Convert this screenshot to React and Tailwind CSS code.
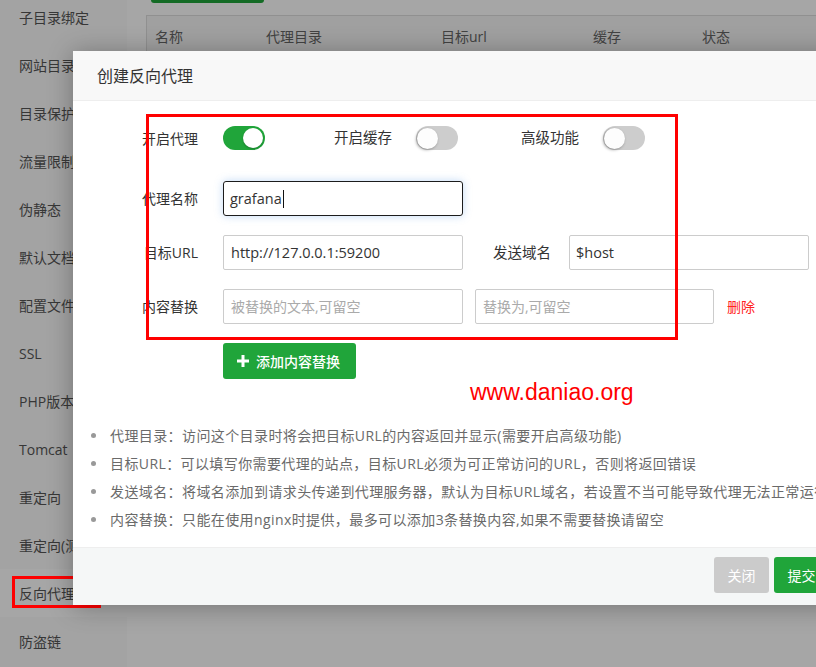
import React from "react";

const FONT = "font-['Open_Sans','Noto_Sans_CJK_SC',sans-serif]";

function Toggle({ on }) {
  return on ? (
    <div className="w-[42px] h-[24px] rounded-full bg-[#20a53a] flex items-center justify-end pr-[2px] shrink-0">
      <div className="w-[20px] h-[20px] rounded-full bg-white shadow-[0_1px_2px_rgba(0,0,0,0.25)]" />
    </div>
  ) : (
    <div className="w-[42px] h-[24px] rounded-full bg-[#cdcdcd] flex items-center pl-[1px] shrink-0">
      <div className="w-[21px] h-[21px] rounded-full bg-[#fdfdfd] shadow-[-1px_1px_3px_rgba(0,0,0,0.35)]" />
    </div>
  );
}

const sideItems = [
  "子目录绑定",
  "网站目录",
  "目录保护",
  "流量限制",
  "伪静态",
  "默认文档",
  "配置文件",
  "SSL",
  "PHP版本",
  "Tomcat",
  "重定向",
  "重定向(测试)",
  "反向代理",
  "防盗链",
];

const tips = [
  "代理目录：访问这个目录时将会把目标URL的内容返回并显示(需要开启高级功能)",
  "目标URL：可以填写你需要代理的站点，目标URL必须为可正常访问的URL，否则将返回错误",
  "发送域名：将域名添加到请求头传递到代理服务器，默认为目标URL域名，若设置不当可能导致代理无法正常运行",
  "内容替换：只能在使用nginx时提供，最多可以添加3条替换内容,如果不需要替换请留空",
];

export default function App() {
  return (
    <div className={`relative w-[816px] h-[667px] overflow-hidden bg-white ${FONT}`}>
      {/* background page */}
      <div className="flex h-full">
        <div className="w-[127px] shrink-0 bg-[#fafafa] overflow-hidden">
          <div className="mt-[-7px]">
            {sideItems.map((t) => (
              <div
                key={t}
                className={`h-[48px] flex items-center pl-[19px] text-[14px] text-[#555] whitespace-nowrap ${
                  t === "反向代理" ? "bg-white" : ""
                }`}
              >
                {t}
              </div>
            ))}
          </div>
        </div>
        <div className="flex-1 pl-[19px] relative">
          <div className="ml-[5px] mt-[-30px] w-[113px] h-[33px] rounded-[3px] bg-[#20a53a]" />
          <div className="mt-[12px] border border-[#ddd] border-r-0">
            <div className="h-[40px] bg-[#f6f6f6] flex items-center text-[14px] text-[#666]">
              <span className="ml-[8px] w-[111px]">名称</span>
              <span className="w-[175px]">代理目录</span>
              <span className="w-[152px]">目标url</span>
              <span className="w-[109px]">缓存</span>
              <span>状态</span>
            </div>
          </div>
        </div>
      </div>

      {/* dim overlay */}
      <div className="absolute inset-0 bg-black/[0.35]" />

      {/* sidebar annotation */}
      <div className="absolute left-[12px] top-[576px] w-[89px] h-[32px] border-[3px] border-[#ff0000]" />

      {/* modal */}
      <div className="absolute left-[73px] top-[51px] w-[771px] bg-white shadow-[0_2px_24px_rgba(0,0,0,0.3)]">
        <div className="h-[50px] bg-[#f8f8f8] border-b border-[#eee] flex items-center pl-[24px] text-[16px] text-[#333]">
          创建反向代理
        </div>

        <div className="relative pt-[25px] pb-[14px]">
          {/* row 1: toggles */}
          <div className="flex items-center h-[24px] text-[14px] text-[#333]">
            <span className="w-[125px] text-right">开启代理</span>
            <div className="ml-[25px]">
              <Toggle on />
            </div>
            <span className="ml-[69px] text-[14.5px]">开启缓存</span>
            <div className="ml-[24px]">
              <Toggle />
            </div>
            <span className="ml-[63px] text-[14.5px]">高级功能</span>
            <div className="ml-[24px]">
              <Toggle />
            </div>
          </div>

          {/* row 2 */}
          <div className="flex items-center mt-[31px] text-[14px] text-[#333]">
            <span className="w-[125px] text-right">代理名称</span>
            <div className="ml-[25px] w-[240px] h-[35px] rounded-[3px] border-[1.5px] border-[#1c1c1c] shadow-[0_0_8px_rgba(80,150,230,0.35)] flex items-center pl-[6px] text-[14.5px] text-[#333]">
              grafana
              <span className="w-[1px] h-[18px] bg-[#111] ml-[1px]" />
            </div>
          </div>

          {/* row 3 */}
          <div className="flex items-center mt-[19px] text-[14px] text-[#333]">
            <span className="w-[125px] text-right">目标URL</span>
            <div className="ml-[25px] w-[240px] h-[35px] rounded-[2px] border border-[#ccc] flex items-center pl-[7px] text-[14.5px] text-[#333]">
              http://127.0.0.1:59200
            </div>
            <span className="ml-[30px] text-[14.5px]">发送域名</span>
            <div className="ml-[18px] w-[240px] h-[35px] rounded-[2px] border border-[#ccc] flex items-center pl-[6px] text-[14.5px] text-[#333]">
              $host
            </div>
          </div>

          {/* row 4 */}
          <div className="flex items-center mt-[19px] text-[14px] text-[#333]">
            <span className="w-[125px] text-right">内容替换</span>
            <div className="ml-[25px] w-[240px] h-[35px] rounded-[2px] border border-[#ccc] flex items-center pl-[7px] text-[14px] text-[#aaa]">
              被替换的文本,可留空
            </div>
            <div className="ml-[12px] w-[239px] h-[35px] rounded-[2px] border border-[#ccc] flex items-center pl-[7px] text-[14px] text-[#aaa]">
              替换为,可留空
            </div>
            <span className="ml-[13px] text-[#f22]">删除</span>
          </div>

          {/* add button */}
          <div className="ml-[150px] mt-[19px] w-[133px] h-[36px] rounded-[3px] bg-[#20a53a] flex items-center pl-[14px] text-white text-[14px] font-medium">
            <svg width="12" height="12" viewBox="0 0 12 12" className="mr-[7px]">
              <rect x="4.5" y="0" width="3" height="12" fill="white" />
              <rect x="0" y="4.5" width="12" height="3" fill="white" />
            </svg>
            添加内容替换
          </div>

          {/* tips */}
          <ul className="mt-[42px]">
            {tips.map((t) => (
              <li key={t} className="h-[28px] flex items-center text-[14px] text-[#6a6a6a] whitespace-nowrap tracking-[0.4px]">
                <span className="ml-[18px] mr-[14px] w-[5px] h-[5px] rounded-full bg-[#999] shrink-0" />
                {t}
              </li>
            ))}
          </ul>

          {/* watermark */}
          <div className="absolute left-[397px] top-[280px] text-[23px] text-[#ff0000] font-['Liberation_Sans',sans-serif] leading-none">
            www.daniao.org
          </div>

          {/* red annotation */}
          <div className="absolute left-[73px] top-[13px] w-[532px] h-[226px] border-[3px] border-[#ff0000]" />
        </div>

        {/* footer */}
        <div className="h-[58px] bg-[#f5f7f7] border-t border-[#eee] flex items-start pt-[9px] pl-[641px] gap-[5px]">
          <div className="w-[55px] h-[36px] rounded-[3px] bg-[#cbcbcb] text-white text-[14px] flex items-center justify-center">
            关闭
          </div>
          <div className="w-[55px] h-[36px] rounded-[3px] bg-[#20a53a] text-white text-[14px] flex items-center justify-center">
            提交
          </div>
        </div>
      </div>
    </div>
  );
}
